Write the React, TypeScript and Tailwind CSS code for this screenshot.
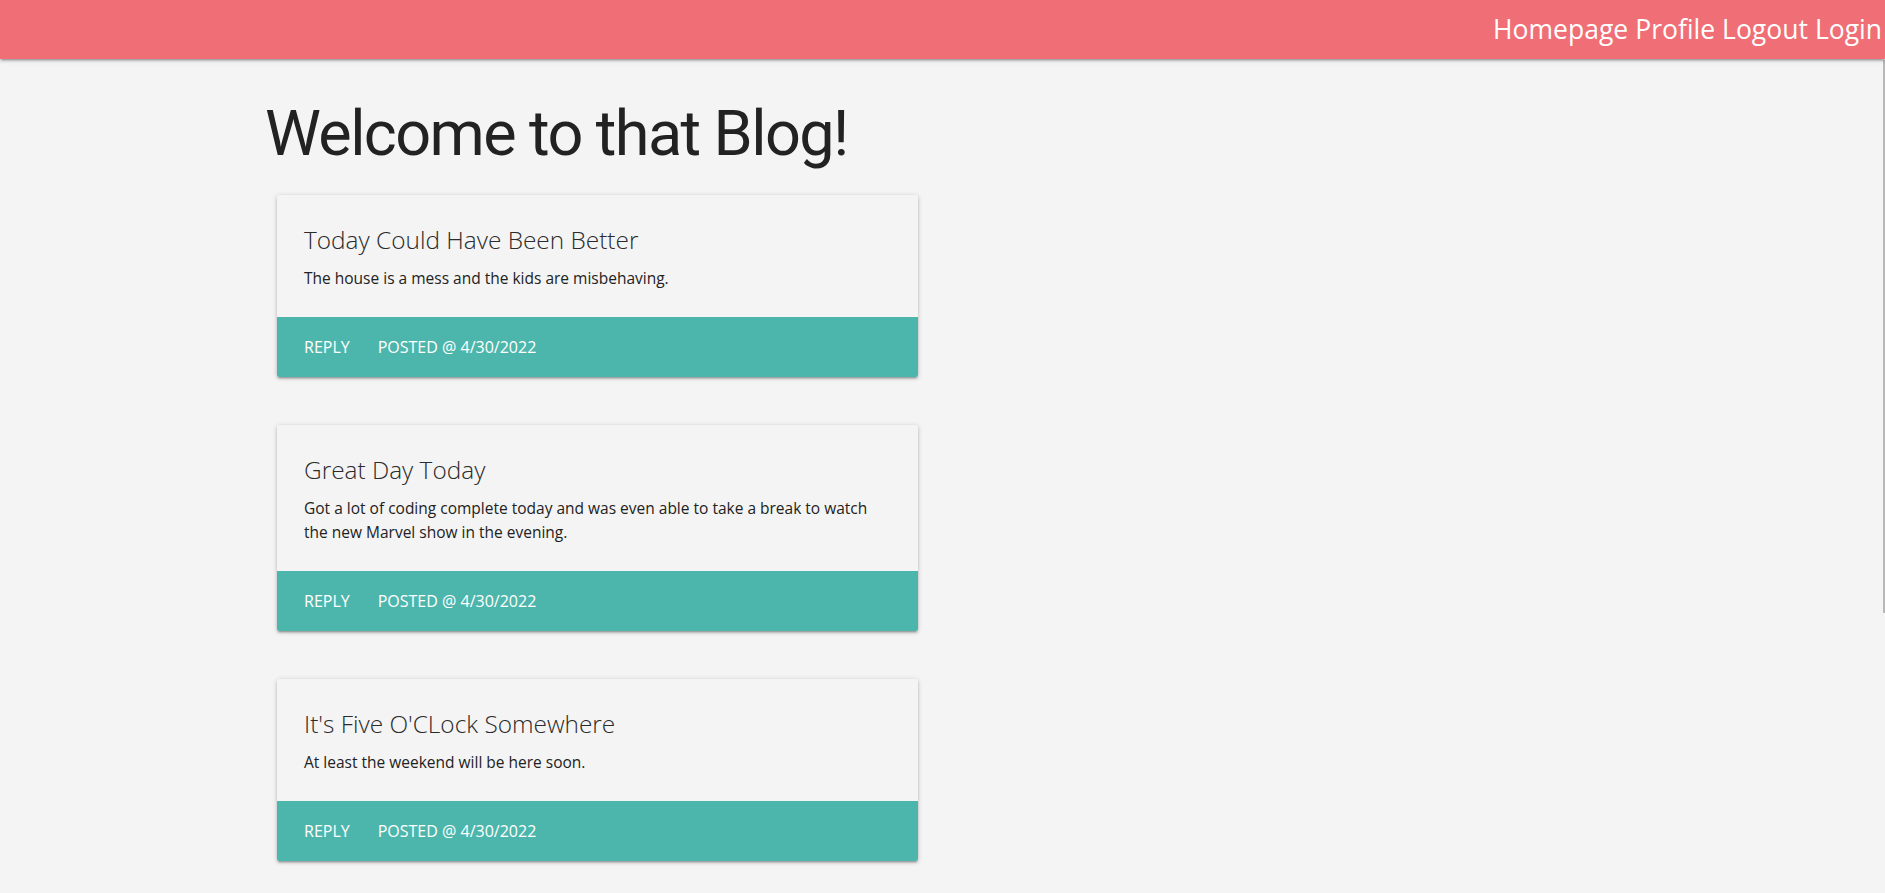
import React from "react";

const posts = [
  {
    title: "Today Could Have Been Better",
    body: "The house is a mess and the kids are misbehaving.",
  },
  {
    title: "Great Day Today",
    body: "Got a lot of coding complete today and was even able to take a break to watch the new Marvel show in the evening.",
  },
  {
    title: "It's Five O'CLock Somewhere",
    body: "At least the weekend will be here soon.",
  },
];

function Card({ title, body }: { title: string; body: string }) {
  return (
    <div className="w-[641px] rounded-[2px] bg-[#f4f4f4] shadow-[0_2px_2px_0_rgba(0,0,0,0.14),0_3px_1px_-2px_rgba(0,0,0,0.12),0_1px_5px_0_rgba(0,0,0,0.2)] overflow-hidden">
      <div className="px-[27px] pt-[29px] pb-[27px]">
        <div className="text-[24.4px] leading-[32px] font-light text-[#2b2b2b]">{title}</div>
        <p className="mt-[10px] text-[15.5px] leading-[24px] text-[#222]">{body}</p>
      </div>
      <div className="h-[60px] bg-[#4db6ac] flex items-center px-[27px] text-[16px] uppercase text-white">
        <span className="mr-[28px]">Reply</span>
        <span>Posted @ 4/30/2022</span>
      </div>
    </div>
  );
}

export default function App() {
  return (
    <div
      className="relative min-h-[893px] bg-[#f4f4f4] text-[#222]"
      style={{ fontFamily: '"Open Sans", "Noto Sans", sans-serif' }}
    >
      <header className="relative z-10 h-[59px] bg-[#f06e75] flex items-center justify-end pr-[3px] shadow-[0_2px_2px_0_rgba(0,0,0,0.14),0_3px_1px_-2px_rgba(0,0,0,0.12),0_1px_5px_0_rgba(0,0,0,0.2)]">
        <nav className="flex gap-[7px] text-[26.5px] text-white">
          <a>Homepage</a>
          <a>Profile</a>
          <a>Logout</a>
          <a>Login</a>
        </nav>
      </header>
      <main className="pl-[265px] pb-[32px]">
        <h1
          className="pt-[40px] text-[63px] leading-[1.1] tracking-[-1.6px] font-normal text-[#222]"
          style={{ fontFamily: 'Roboto, "Open Sans", sans-serif' }}
        >
          Welcome to that Blog!
        </h1>
        <div className="mt-[27px] ml-[12px] flex flex-col gap-[48px]">
          {posts.map((p) => (
            <Card key={p.title} title={p.title} body={p.body} />
          ))}
        </div>
      </main>
      <div className="absolute right-0 top-[60px] h-[553px] w-[2px] bg-[#b8b8b8]" />
    </div>
  );
}
